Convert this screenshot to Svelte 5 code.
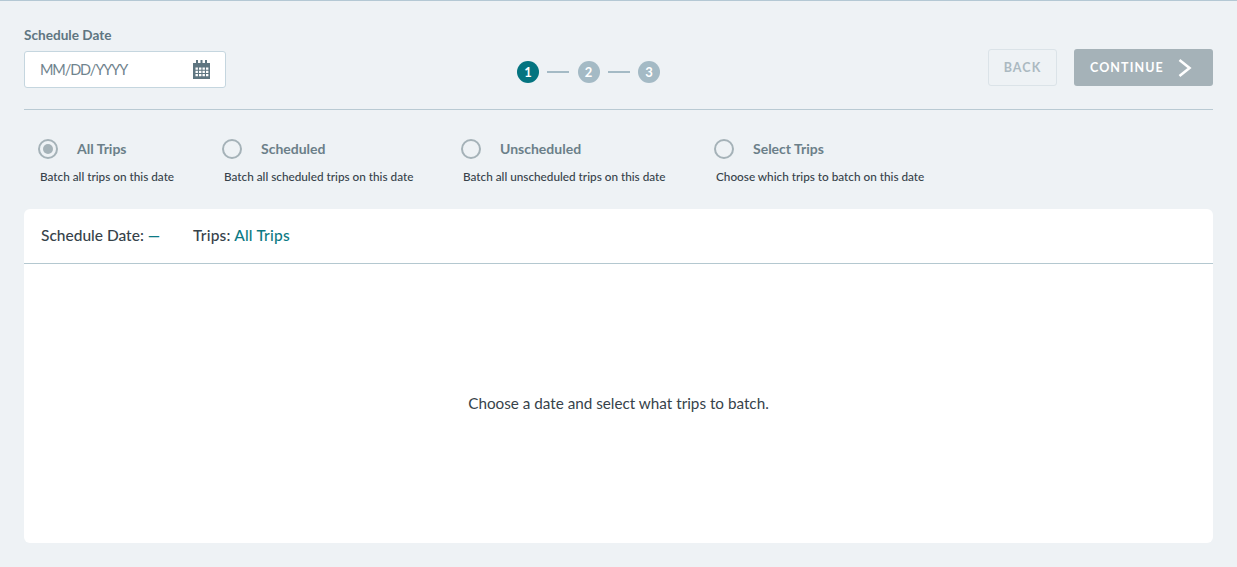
<script lang="ts">
	const options = [
		{ label: 'All Trips', hint: 'Batch all trips on this date', checked: true, width: 184 },
		{ label: 'Scheduled', hint: 'Batch all scheduled trips on this date', checked: false, width: 239 },
		{ label: 'Unscheduled', hint: 'Batch all unscheduled trips on this date', checked: false, width: 253 },
		{ label: 'Select Trips', hint: 'Choose which trips to batch on this date', checked: false, width: 230 }
	];
</script>

<div class="page">
	<header class="top">
		<div class="date-field">
			<span class="field-label">Schedule Date</span>
			<div class="date-input">
				<span class="placeholder">MM/DD/YYYY</span>
				<svg class="cal" width="19" height="19" viewBox="0 0 19 19" aria-hidden="true">
					<path fill="#5f7681" d="M0 3h3V0h2v3h2.5V0h2v3h2.5V0h2v3h3v16H0z" />
					<g fill="#fff">
						<path d="M2.5 7.5h2.4v2.2H2.5zM6 7.5h2.4v2.2H6zM9.5 7.5h2.4v2.2H9.5zM13 7.5h2.4v2.2H13z" />
						<path d="M2.5 10.8h2.4V13H2.5zM6 10.8h2.4V13H6zM9.5 10.8h2.4V13H9.5zM13 10.8h2.4V13H13z" />
						<path d="M2.5 14.1h2.4v2.2H2.5zM6 14.1h2.4v2.2H6zM9.5 14.1h2.4v2.2H9.5zM13 14.1h2.4v2.2H13z" />
					</g>
				</svg>
			</div>
		</div>
		<div class="steps">
			<span class="step active">1</span>
			<span class="dash"></span>
			<span class="step">2</span>
			<span class="dash"></span>
			<span class="step">3</span>
		</div>
		<div class="actions">
			<button class="back" disabled>BACK</button>
			<button class="continue" disabled>
				CONTINUE
				<svg width="16" height="20" viewBox="0 0 16 20" aria-hidden="true">
					<path d="M2.5 2l10 8-10 8" fill="none" stroke="#fff" stroke-width="2.6" />
				</svg>
			</button>
		</div>
	</header>

	<div class="options">
		{#each options as opt}
			<div class="option" style="width: {opt.width}px">
				<div class="option-head">
					<span class="radio" class:checked={opt.checked}></span>
					<span class="option-label">{opt.label}</span>
				</div>
				<div class="option-hint">{opt.hint}</div>
			</div>
		{/each}
	</div>

	<section class="card">
		<div class="card-head">
			<span class="summary">Schedule Date: <em>—</em></span>
			<span class="summary trips">Trips: <em>All Trips</em></span>
		</div>
		<div class="card-body">Choose a date and select what trips to batch.</div>
	</section>
</div>

<style>
	:global(body) {
		margin: 0;
		background: #eef2f5;
	}

	.page {
		box-sizing: border-box;
		height: 567px;
		padding: 0 24px;
		border-top: 1px solid #b4c8d4;
		font-family: 'Lato', 'Noto Sans', sans-serif;
		overflow: hidden;
	}

	.top {
		display: flex;
		justify-content: space-between;
		align-items: flex-start;
		height: 108px;
		border-bottom: 1px solid #b9cad3;
	}

	.date-field {
		padding-top: 26px;
		width: 202px;
	}

	.field-label {
		display: block;
		font-size: 13.6px;
		line-height: 16px;
		font-weight: 700;
		color: #5f7681;
	}

	.date-input {
		box-sizing: border-box;
		margin-top: 8px;
		height: 37px;
		background: #fff;
		border: 1px solid #c5d6df;
		border-radius: 3px;
		display: flex;
		align-items: center;
		justify-content: space-between;
		padding: 0 13px 0 15px;
	}

	.placeholder {
		font-size: 14.5px;
		letter-spacing: -1.1px;
		color: #6f838d;
	}

	.steps {
		display: flex;
		align-items: center;
		gap: 8.25px;
		margin-top: 60px;
		margin-right: 37px;
	}

	.step {
		width: 22px;
		height: 22px;
		border-radius: 50%;
		background: #a4bac5;
		color: #fff;
		font-size: 13px;
		font-weight: 700;
		display: flex;
		align-items: center;
		justify-content: center;
	}

	.step.active {
		background: #047480;
	}

	.dash {
		width: 22px;
		height: 2px;
		background: #a4bac5;
	}

	.actions {
		display: flex;
		gap: 17px;
		padding-top: 48px;
	}

	button {
		box-sizing: border-box;
		height: 37px;
		border-radius: 3px;
		font-family: inherit;
		font-size: 12.5px;
		font-weight: 700;
		letter-spacing: 1.1px;
		padding: 0;
	}

	.back {
		width: 69px;
		background: transparent;
		border: 1px solid #dbe3e8;
		color: #abb9c1;
	}

	.continue {
		width: 139px;
		background: #a5b2b8;
		border: none;
		color: #fff;
		display: flex;
		align-items: center;
		justify-content: space-between;
		padding: 0 20px 0 16px;
	}

	.options {
		display: flex;
		height: 99px;
		padding: 27px 0 0 14px;
		box-sizing: border-box;
	}

	.option-head {
		display: flex;
		align-items: center;
		gap: 19px;
		height: 24px;
	}

	.radio {
		box-sizing: border-box;
		width: 20px;
		height: 20px;
		border: 2px solid #a5b2b8;
		border-radius: 50%;
		position: relative;
	}

	.radio.checked::after {
		content: '';
		position: absolute;
		inset: 3px;
		border-radius: 50%;
		background: #a5b2b8;
	}

	.option-label {
		font-size: 14px;
		line-height: 24px;
		height: 24px;
		font-weight: 700;
		color: #6b7f89;
	}

	.option-hint {
		margin: 8px 0 0 2px;
		font-size: 11.75px;
		line-height: 16px;
		color: #36424a;
		font-weight: 500;
	}

	.card {
		height: 334px;
		background: #fff;
		border-radius: 6px;
		display: flex;
		flex-direction: column;
	}

	.card-head {
		box-sizing: border-box;
		height: 55px;
		flex: none;
		display: flex;
		align-items: center;
		gap: 33px;
		padding: 0 17px 2px;
		border-bottom: 1px solid #b4c8d0;
	}

	.summary {
		font-size: 15.5px;
		font-weight: 500;
		color: #36424a;
	}

	.summary.trips {
		letter-spacing: 0.2px;
	}

	.summary em {
		font-style: normal;
		color: #0c7a85;
	}

	.card-body {
		flex: 1;
		display: flex;
		align-items: center;
		justify-content: center;
		font-size: 15.25px;
		color: #36424a;
		padding-bottom: 2px;
	}
</style>
